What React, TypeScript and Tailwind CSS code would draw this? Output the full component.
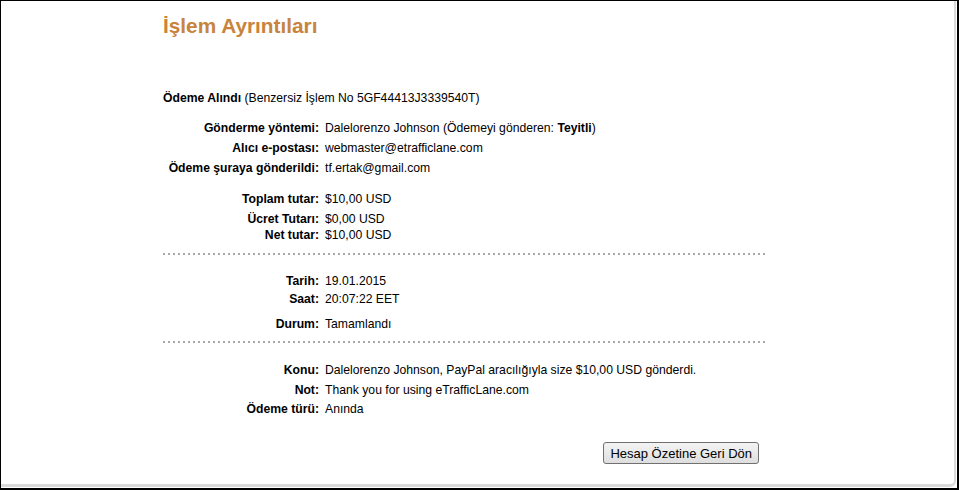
import React from "react";

type Row = { label: string; value: React.ReactNode; mt: string };

const Field: React.FC<{ row: Row }> = ({ row }) => (
  <div className={`flex leading-4 h-4 ${row.mt}`}>
    <div className="w-[156px] shrink-0 text-right font-bold whitespace-nowrap">{row.label}</div>
    <div className="pl-[6px] whitespace-nowrap">{row.value}</div>
  </div>
);

const Dotted: React.FC<{ mt: string }> = ({ mt }) => (
  <div
    className={`h-[2px] w-[603px] bg-[linear-gradient(to_right,#a8a8a8_2px,transparent_2px)] bg-[length:5px_2px] bg-repeat-x ${mt}`}
  />
);

const App: React.FC = () => {
  const sender: Row[] = [
    {
      label: "Gönderme yöntemi:",
      value: (
        <>
          Dalelorenzo Johnson (Ödemeyi gönderen: <b>Teyitli</b>)
        </>
      ),
      mt: "mt-[14px]",
    },
    { label: "Alıcı e-postası:", value: "webmaster@etrafficlane.com", mt: "mt-[4px]" },
    { label: "Ödeme şuraya gönderildi:", value: "tf.ertak@gmail.com", mt: "mt-[4px]" },
    { label: "Toplam tutar:", value: "$10,00 USD", mt: "mt-[15px]" },
    { label: "Ücret Tutarı:", value: "$0,00 USD", mt: "mt-[4px]" },
    { label: "Net tutar:", value: "$10,00 USD", mt: "mt-0" },
  ];

  const when: Row[] = [
    { label: "Tarih:", value: "19.01.2015", mt: "mt-[18px]" },
    { label: "Saat:", value: "20:07:22 EET", mt: "mt-[2px]" },
    { label: "Durum:", value: "Tamamlandı", mt: "mt-[9px]" },
  ];

  const extra: Row[] = [
    {
      label: "Konu:",
      value: "Dalelorenzo Johnson, PayPal aracılığıyla size $10,00 USD gönderdi.",
      mt: "mt-[19px]",
    },
    { label: "Not:", value: "Thank you for using eTrafficLane.com", mt: "mt-[4px]" },
    { label: "Ödeme türü:", value: "Anında", mt: "mt-[3px]" },
  ];

  return (
    <div className="w-[959px] h-[490px] bg-white border-l border-t border-r-2 border-b-2 border-black font-['Liberation_Sans',Arial,sans-serif] text-[12.2px] text-black">
      <div className="w-[955px] h-[486px] border-r-2 border-b-[3px] border-[#dadada] rounded-br-[6px] pl-[162px]">
        {/* heading */}
        <h1 className="pt-[13px] text-[20.8px] leading-6 font-bold text-[#c8843c]">İşlem Ayrıntıları</h1>

        <div className="mt-[52px] leading-4 h-4 whitespace-nowrap">
          <b>Ödeme Alındı</b> (Benzersiz İşlem No 5GF44413J3339540T)
        </div>

        {sender.map((r) => (
          <Field key={r.label} row={r} />
        ))}

        <Dotted mt="mt-[10px]" />

        {when.map((r) => (
          <Field key={r.label} row={r} />
        ))}

        <Dotted mt="mt-[9px]" />

        {extra.map((r) => (
          <Field key={r.label} row={r} />
        ))}

        {/* back button */}
        <div className="w-[603px] flex justify-end pr-[7px] mt-[25px]">
          <button className="h-[22px] px-[6px] border border-[#707070] rounded-[3px] bg-[linear-gradient(#f4f4f4,#dedede)] text-[13px] leading-none text-black whitespace-nowrap">
            Hesap Özetine Geri Dön
          </button>
        </div>
      </div>
    </div>
  );
};

export default App;
